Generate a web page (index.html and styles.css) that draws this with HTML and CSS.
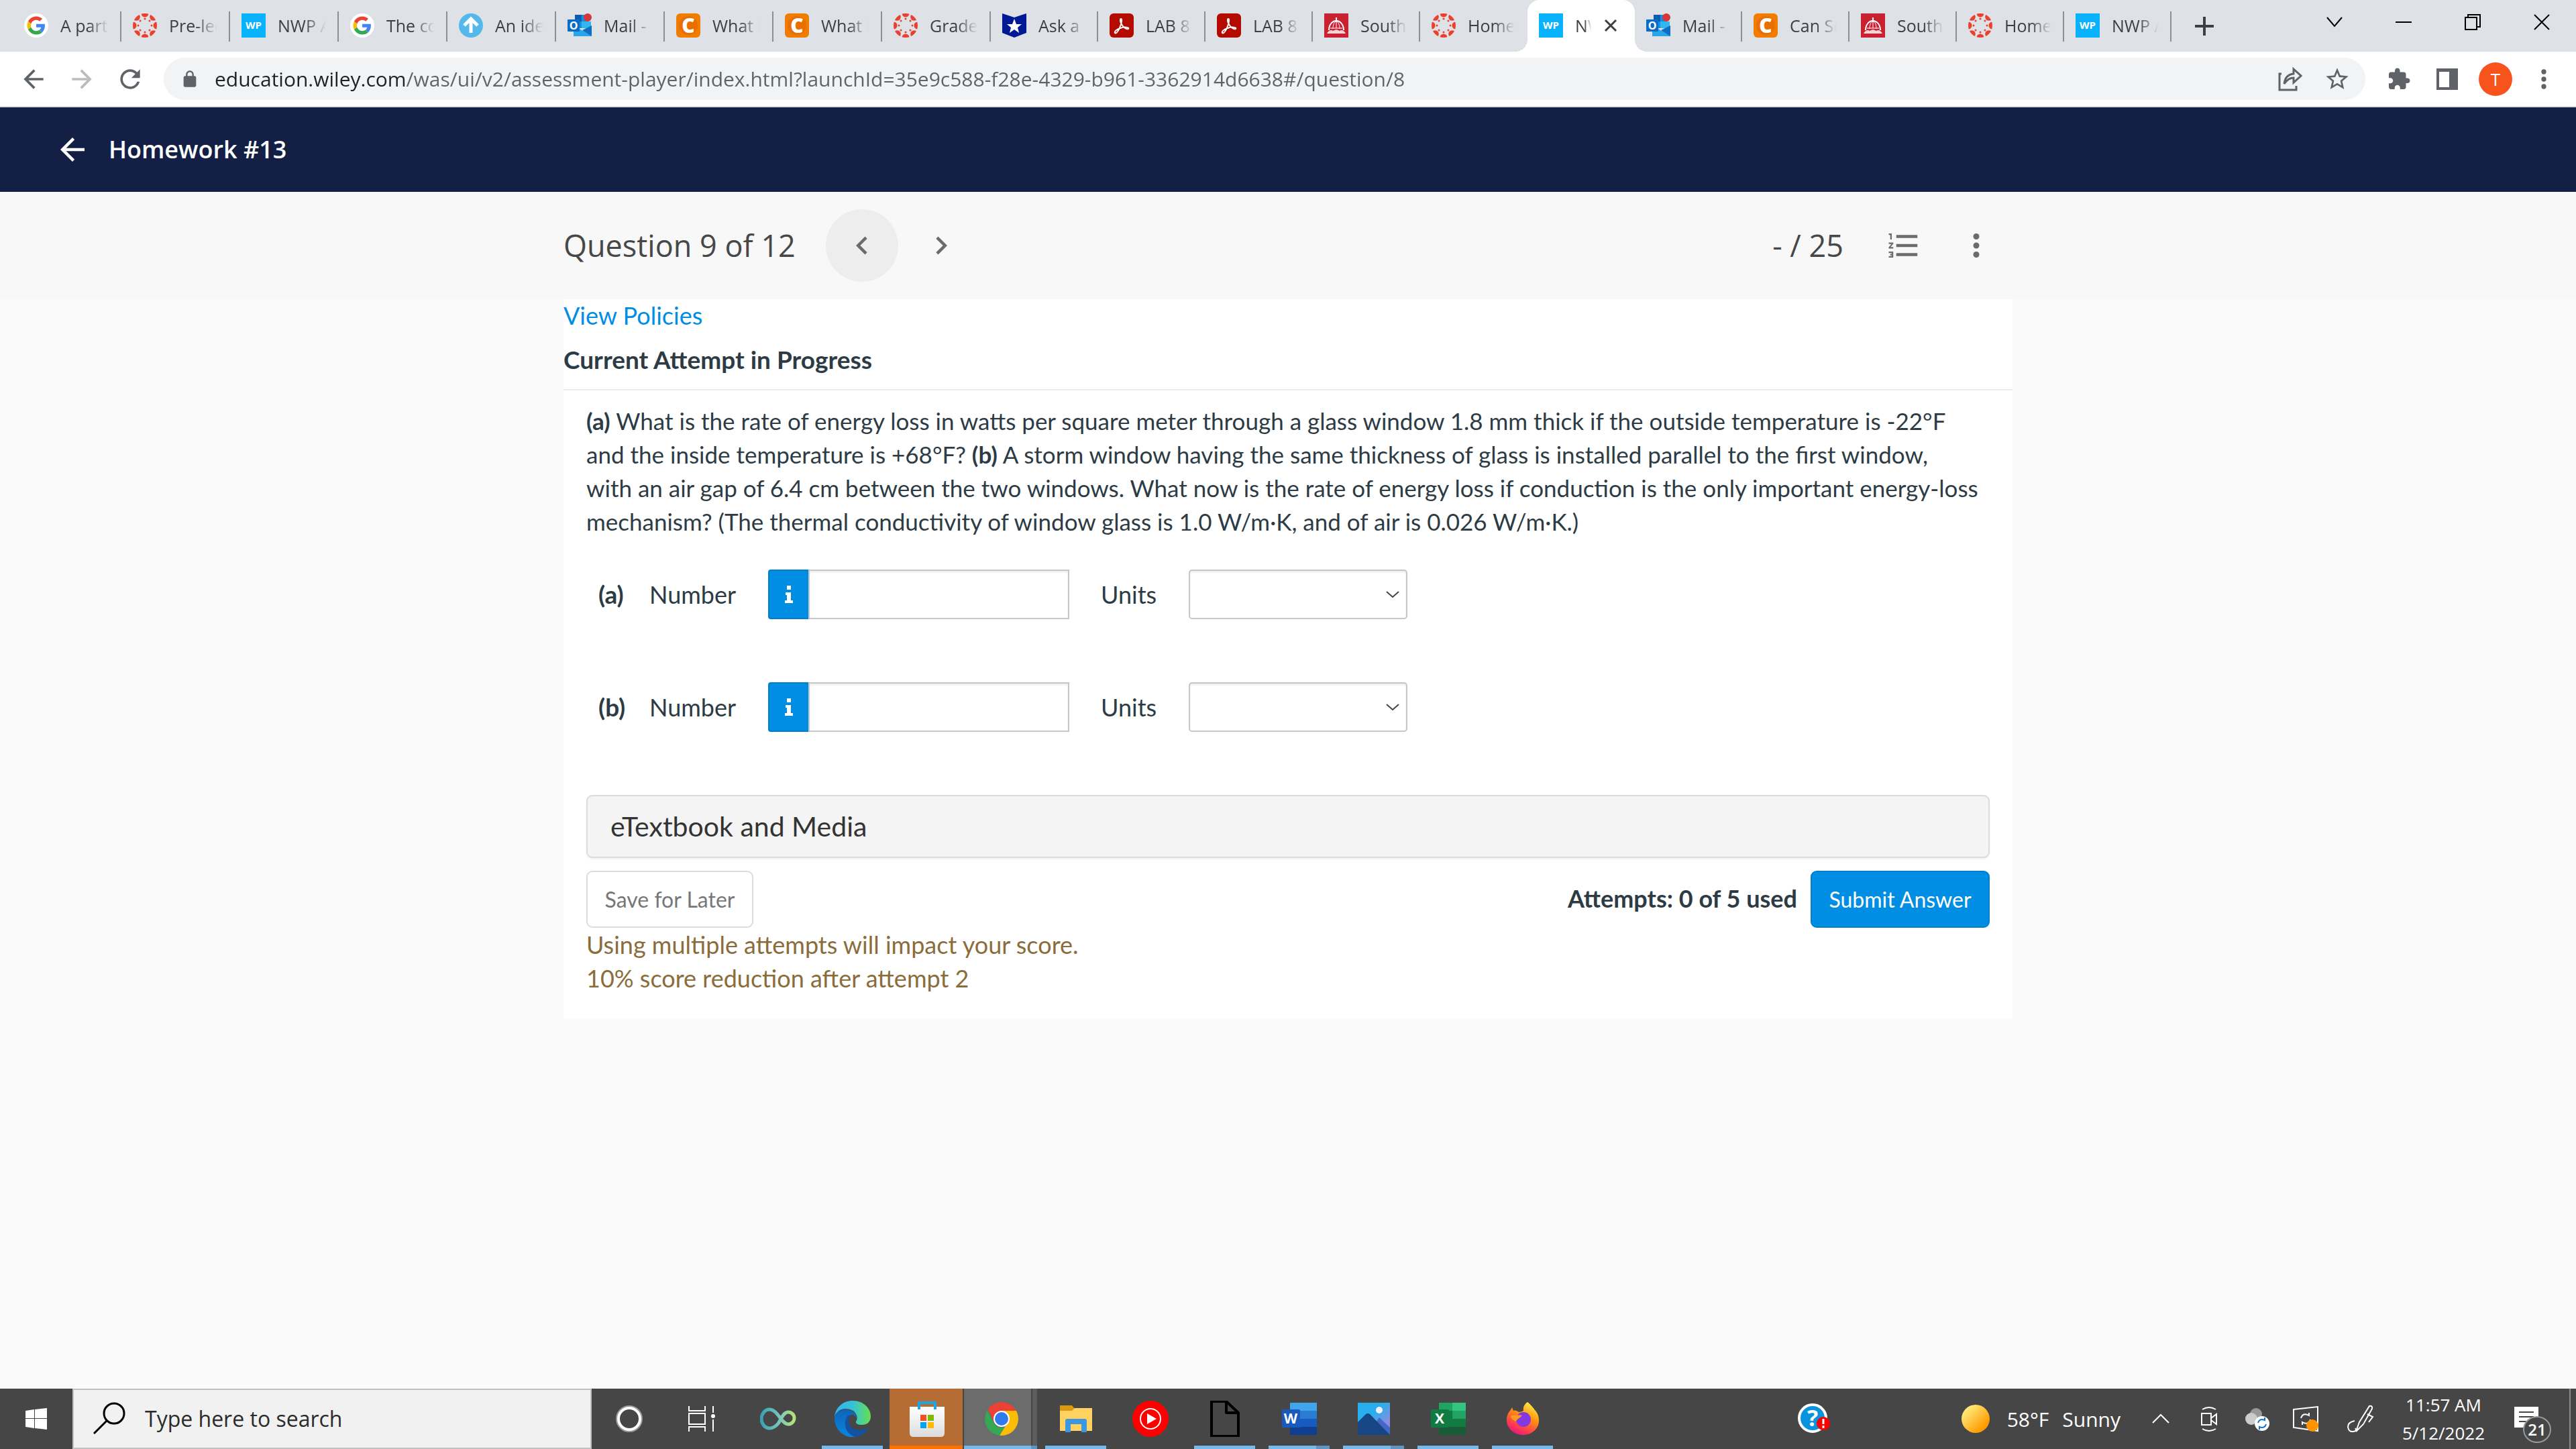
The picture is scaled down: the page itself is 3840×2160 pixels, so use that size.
FILE: index.html
```html
<!DOCTYPE html>
<html lang="en">
<head>
    <meta charset="UTF-8">
    <meta name="viewport" content="width=device-width, initial-scale=1.0">
    <title>NWP Assessment Player UI Application</title>
    <link rel="stylesheet" href="styles.css">
</head>
<body>

<!-- Shared icons -->
<svg class="sprite" aria-hidden="true">
    <defs>
        <clipPath id="clip-ring"><circle cx="18" cy="18" r="18"/></clipPath>
        <clipPath id="clip-chrome"><circle cx="25" cy="25" r="25"/></clipPath>
        <linearGradient id="grad-sun" x1="0" y1="0" x2="1" y2="1">
            <stop offset="0.2" stop-color="#ffe574"/><stop offset="0.8" stop-color="#ff9a00"/>
        </linearGradient>
        <linearGradient id="grad-loop" x1="0" y1="0" x2="1" y2="0">
            <stop offset="0" stop-color="#3aa0b8"/><stop offset="0.6" stop-color="#7fcbb8"/><stop offset="1" stop-color="#b4e07c"/>
        </linearGradient>
        <linearGradient id="grad-edge" x1="0" y1="0" x2="1" y2="0">
            <stop offset="0" stop-color="#35b4f2"/><stop offset="0.5" stop-color="#35c1d8"/><stop offset="1" stop-color="#66e04e"/>
        </linearGradient>
        <linearGradient id="grad-edge-low" x1="0" y1="0" x2="0" y2="1">
            <stop offset="0" stop-color="#0c66b8"/><stop offset="1" stop-color="#0a84e0"/>
        </linearGradient>
        <linearGradient id="grad-fox" x1="0.8" y1="0" x2="0.3" y2="1">
            <stop offset="0" stop-color="#fff44f"/><stop offset="0.4" stop-color="#ff980e"/><stop offset="0.8" stop-color="#ff3750"/><stop offset="1" stop-color="#e31587"/>
        </linearGradient>
        <linearGradient id="grad-bag" x1="0" y1="0" x2="0" y2="1">
            <stop offset="0" stop-color="#ffffff"/><stop offset="1" stop-color="#dcdcdc"/>
        </linearGradient>
        <linearGradient id="grad-sky" x1="0" y1="0" x2="1" y2="1">
            <stop offset="0.4" stop-color="#28aeec"/><stop offset="0.8" stop-color="#8f8ce0"/>
        </linearGradient>
    </defs>
    <symbol id="google" viewBox="0 0 64 64">
        <circle cx="32" cy="32" r="32" fill="#fff"/>
        <g transform="translate(8 8)">
            <path fill="#ea4335" d="M24 9.5c3.54 0 6.71 1.22 9.21 3.6l6.85-6.85C35.9 2.38 30.47 0 24 0 14.62 0 6.51 5.38 2.56 13.22l7.98 6.19C12.43 13.72 17.74 9.5 24 9.5z"/>
            <path fill="#4285f4" d="M46.98 24.55c0-1.57-.15-3.09-.38-4.55H24v9.02h12.94c-.58 2.96-2.26 5.48-4.78 7.18l7.73 6c4.51-4.18 7.09-10.36 7.09-17.65z"/>
            <path fill="#fbbc05" d="M10.53 28.59c-.48-1.45-.76-2.99-.76-4.59s.27-3.14.76-4.59l-7.98-6.19C.92 16.46 0 20.12 0 24c0 3.88.92 7.54 2.56 10.78l7.97-6.19z"/>
            <path fill="#34a853" d="M24 48c6.48 0 11.93-2.13 15.89-5.81l-7.73-6c-2.15 1.45-4.92 2.3-8.16 2.3-6.26 0-11.57-4.22-13.47-9.91l-7.98 6.19C6.51 42.62 14.62 48 24 48z"/>
        </g>
    </symbol>
    <symbol id="canvas" viewBox="0 0 36 36">
        <g fill="#e8412f" clip-path="url(#clip-ring)">
            <circle cx="18" cy="0" r="5.5"/><circle cx="30.7" cy="5.3" r="5.5"/><circle cx="36" cy="18" r="5.5"/><circle cx="30.7" cy="30.7" r="5.5"/>
            <circle cx="18" cy="36" r="5.5"/><circle cx="5.3" cy="30.7" r="5.5"/><circle cx="0" cy="18" r="5.5"/><circle cx="5.3" cy="5.3" r="5.5"/>
            <circle cx="18" cy="8" r="1.5"/><circle cx="25" cy="11" r="1.5"/><circle cx="28" cy="18" r="1.5"/><circle cx="25" cy="25" r="1.5"/>
            <circle cx="18" cy="28" r="1.5"/><circle cx="11" cy="25" r="1.5"/><circle cx="8" cy="18" r="1.5"/><circle cx="11" cy="11" r="1.5"/>
        </g>
    </symbol>
    <symbol id="wp" viewBox="0 0 36 36">
        <rect width="36" height="36" fill="#08b2fc"/>
        <text class="logo-text" x="18" y="23" font-size="15" text-anchor="middle">WP</text>
    </symbol>
    <symbol id="arrow-up" viewBox="0 0 36 36">
        <circle cx="18" cy="18" r="18" fill="#53b9ea"/>
        <path d="M18 29V9M8 18L18 8l10 10" fill="none" stroke="#fff" stroke-width="5"/>
    </symbol>
    <symbol id="outlook" viewBox="0 0 36 36">
        <path d="M11 2h20v20H11z" fill="#1490df"/><path d="M11 2h10v10H11z" fill="#0a5cb0"/><path d="M21 12h14v10H21z" fill="#32b8f0"/>
        <path d="M9 18l14 8 13-8v16H9z" fill="#2aa5ea"/><path d="M36 18v16L22 25z" fill="#0f6fc4"/>
        <rect y="9" width="18" height="18" rx="1" fill="#0a6cc8"/>
        <text class="logo-text" x="9" y="24" font-size="16" text-anchor="middle">O</text>
        <circle cx="30" cy="6" r="6" fill="#d6353a"/>
    </symbol>
    <symbol id="chegg" viewBox="0 0 36 36">
        <rect width="36" height="36" rx="6" fill="#f07d00"/>
        <circle cx="18" cy="18" r="14" fill="#e96f00"/>
        <text class="logo-text heavy" x="18" y="29" font-size="30" text-anchor="middle">C</text>
    </symbol>
    <symbol id="badge-star" viewBox="0 0 36 36">
        <path d="M0 0l18 6 18-6v29l-18 7-18-7z" fill="#001a96"/>
        <path d="M18 8l3 8h8l-6 5 2 8-7-5-7 5 2-8-6-5h8z" fill="#fff"/>
    </symbol>
    <symbol id="acrobat" viewBox="0 0 36 36">
        <rect width="36" height="36" rx="6" fill="#b30b00"/>
        <path d="M17 8c-2 0-1 6 2 10 3 4 7 6 9 5 2-2-6-4-12-1-6 2-9 5-8 7 2 2 6-4 8-10 2-5 3-11 1-11z" fill="none" stroke="#fff" stroke-width="2"/>
    </symbol>
    <symbol id="dome" viewBox="0 0 36 36">
        <rect width="36" height="36" fill="#c92132"/>
        <path d="M18 6v5M7 25c0-8 5-14 11-14s11 6 11 14" fill="none" stroke="#fff" stroke-width="2"/>
        <path d="M18 11v11M13 23c0-6 2-11 5-11s5 5 5 11M9 22h18" fill="none" stroke="#fff" stroke-width="1"/>
        <path d="M4 30q4-7 9-4l5-2 5 2q5-3 9 4z" fill="#fff" fill-opacity="0.8"/>
    </symbol>
    <symbol id="back" viewBox="0 0 24 24"><path fill="currentColor" d="M20 11H7.83l5.59-5.59L12 4l-8 8 8 8 1.41-1.41L7.83 13H20v-2z"/></symbol>
    <symbol id="forward" viewBox="0 0 24 24"><path fill="currentColor" d="M12 4l-1.41 1.41L16.17 11H4v2h12.17l-5.58 5.59L12 20l8-8z"/></symbol>
    <symbol id="dots" viewBox="0 0 24 24"><g fill="currentColor"><circle cx="12" cy="6" r="2"/><circle cx="12" cy="12" r="2"/><circle cx="12" cy="18" r="2"/></g></symbol>
</svg>

<header class="browser">
    <div class="tab-strip">
        <nav class="tabs" aria-label="Tabs">
            <a class="tab" href="#"><svg><use href="#google"/></svg><span>A part</span></a>
            <a class="tab" href="#"><svg><use href="#canvas"/></svg><span>Pre-lec</span></a>
            <a class="tab" href="#"><svg><use href="#wp"/></svg><span>NWP A</span></a>
            <a class="tab" href="#"><svg><use href="#google"/></svg><span>The co</span></a>
            <a class="tab" href="#"><svg><use href="#arrow-up"/></svg><span>An ide</span></a>
            <a class="tab" href="#"><svg><use href="#outlook"/></svg><span>Mail -</span></a>
            <a class="tab" href="#"><svg><use href="#chegg"/></svg><span>What i</span></a>
            <a class="tab" href="#"><svg><use href="#chegg"/></svg><span>What i</span></a>
            <a class="tab" href="#"><svg><use href="#canvas"/></svg><span>Grade</span></a>
            <a class="tab" href="#"><svg><use href="#badge-star"/></svg><span>Ask a</span></a>
            <a class="tab" href="#"><svg><use href="#acrobat"/></svg><span>LAB 8</span></a>
            <a class="tab" href="#"><svg><use href="#acrobat"/></svg><span>LAB 8</span></a>
            <a class="tab" href="#"><svg><use href="#dome"/></svg><span>South</span></a>
            <a class="tab before-active" href="#"><svg><use href="#canvas"/></svg><span>Home</span></a>
            <div class="tab active">
                <svg><use href="#wp"/></svg><span>NW</span>
                <button class="tab-close" aria-label="Close tab"><svg viewBox="0 0 20 20"><path d="M2 2l16 16M18 2L2 18" stroke="#3c4043" stroke-width="3"/></svg></button>
            </div>
            <a class="tab" href="#"><svg><use href="#outlook"/></svg><span>Mail -</span></a>
            <a class="tab" href="#"><svg><use href="#chegg"/></svg><span>Can So</span></a>
            <a class="tab" href="#"><svg><use href="#dome"/></svg><span>South</span></a>
            <a class="tab" href="#"><svg><use href="#canvas"/></svg><span>Home</span></a>
            <a class="tab" href="#"><svg><use href="#wp"/></svg><span>NWP A</span></a>
        </nav>
        <button class="new-tab" aria-label="New tab"><svg viewBox="0 0 28 28"><path d="M14 0v28M0 14h28" stroke="#3c4043" stroke-width="4"/></svg></button>
        <div class="window-controls">
            <button aria-label="Search tabs"><svg viewBox="0 0 24 24"><path d="M1 5l11 13L23 5"/></svg></button>
            <button aria-label="Minimize"><svg viewBox="0 0 24 24"><path d="M0 12h24"/></svg></button>
            <button aria-label="Restore"><svg viewBox="0 0 24 24"><path d="M1 5h17v18H1zM5 5V1h18v18h-5"/></svg></button>
            <button aria-label="Close"><svg viewBox="0 0 24 24"><path d="M1 1l22 22M23 1L1 23"/></svg></button>
        </div>
    </div>
    <div class="toolbar">
        <div class="nav-buttons">
            <button aria-label="Back"><svg><use href="#back"/></svg></button>
            <button aria-label="Forward" class="faded"><svg><use href="#forward"/></svg></button>
            <button aria-label="Reload"><svg viewBox="0 0 24 24"><path fill="currentColor" d="M17.65 6.35C16.2 4.9 14.21 4 12 4c-4.42 0-7.99 3.58-7.99 8s3.57 8 7.99 8c3.73 0 6.84-2.55 7.73-6h-2.08c-.82 2.33-3.04 4-5.65 4-3.31 0-6-2.69-6-6s2.69-6 6-6c1.66 0 3.14.69 4.22 1.78L13 11h7V4l-2.35 2.35z"/></svg></button>
        </div>
        <div class="omnibox">
            <svg class="lock" viewBox="0 0 24 24"><path fill="currentColor" d="M18 8h-1V6c0-2.76-2.24-5-5-5S7 3.24 7 6v2H6c-1.1 0-2 .9-2 2v10c0 1.1.9 2 2 2h12c1.1 0 2-.9 2-2V10c0-1.1-.9-2-2-2zM9 6c0-1.66 1.34-3 3-3s3 1.34 3 3v2H9V6z"/></svg>
            <input type="text" class="url" aria-label="Address" value="education.wiley.com/was/ui/v2/assessment-player/index.html?launchId=35e9c588-f28e-4329-b961-3362914d6638#/question/8">
            <button aria-label="Share"><svg viewBox="0 0 36 36"><path d="M5 10H2v24h25v-6M9 25c1-9 5-14 14-15V3l11 10-11 10v-7c-6 0-10 3-14 9z" fill="none" stroke="currentColor" stroke-width="3"/></svg></button>
            <button aria-label="Bookmark"><svg class="star" viewBox="0 0 24 24"><path fill="currentColor" d="M22 9.24l-7.19-.62L12 2 9.19 8.63 2 9.24l5.46 4.73L5.82 21 12 17.27 18.18 21l-1.63-7.03L22 9.24zM12 15.4l-3.76 2.27 1-4.28-3.32-2.88 4.38-.38L12 6.1l1.71 4.04 4.38.38-3.32 2.88 1 4.28L12 15.4z"/></svg></button>
        </div>
        <div class="nav-buttons">
            <button aria-label="Extensions"><svg class="small" viewBox="0 0 24 24"><path fill="currentColor" d="M20.5 11H19V7c0-1.1-.9-2-2-2h-4V3.5C13 2.12 11.88 1 10.5 1S8 2.12 8 3.5V5H4c-1.1 0-1.99.9-1.99 2v3.8H3.5c1.49 0 2.7 1.21 2.7 2.7s-1.21 2.7-2.7 2.7H2V20c0 1.1.9 2 2 2h3.8v-1.5c0-1.49 1.21-2.7 2.7-2.7 1.49 0 2.7 1.21 2.7 2.7V22H17c1.1 0 2-.9 2-2v-4h1.5c1.38 0 2.5-1.12 2.5-2.5S21.88 11 20.5 11z"/></svg></button>
            <button aria-label="Side panel"><svg class="small" viewBox="0 0 36 36"><path fill="currentColor" fill-rule="evenodd" d="M2 2h32v32H2zM6 7v23h15V7z"/></svg></button>
            <button aria-label="Profile"><span class="avatar">T</span></button>
            <button aria-label="Menu"><svg><use href="#dots"/></svg></button>
        </div>
    </div>
</header>

<main class="page">
    <div class="app-bar">
        <button class="app-back" aria-label="Back to assignments"><svg><use href="#back"/></svg></button>
        <h1>Homework #13</h1>
    </div>

    <div class="question-bar">
        <div class="wrap">
            <h2>Question 9 of 12</h2>
            <button class="round filled" aria-label="Previous question"><svg viewBox="0 0 24 24"><path fill="currentColor" d="M15.41 7.41L14 6l-6 6 6 6 1.41-1.41L10.83 12z"/></svg></button>
            <button class="round" aria-label="Next question"><svg viewBox="0 0 24 24"><path fill="currentColor" d="M8.59 16.59L10 18l6-6-6-6-1.41 1.41L13.17 12z"/></svg></button>
            <div class="score">- / 25</div>
            <div class="bar-menu">
                <button class="round" aria-label="Question list"><svg viewBox="0 0 24 24"><path fill="currentColor" d="M2 17h2v.5H3v1h1v.5H2v1h3v-4H2v1zm1-9h1V4H2v1h1v3zm-1 3h1.8L2 13.1v.9h3v-1H3.2L5 10.9V10H2v1zm5-6v2h14V5H7zm0 14h14v-2H7v2zm0-6h14v-2H7v2z"/></svg></button>
                <button class="round" aria-label="More options"><svg><use href="#dots"/></svg></button>
            </div>
        </div>
    </div>

    <div class="wrap panel">
        <a class="policies" href="#">View Policies</a>
        <h3>Current Attempt in Progress</h3>
        <form class="question">
            <p class="question-text"><b>(a)</b> What is the rate of energy loss in watts per square meter through a glass window 1.8 mm thick if the outside temperature is -22°F<br>
                and the inside temperature is +68°F? <b>(b)</b> A storm window having the same thickness of glass is installed parallel to the first window,<br>
                with an air gap of 6.4 cm between the two windows. What now is the rate of energy loss if conduction is the only important energy-loss<br>
                mechanism? (The thermal conductivity of window glass is 1.0 W/m·K, and of air is 0.026 W/m·K.)</p>

            <div class="answer-row">
                <b class="part">(a)</b>
                <label class="number-label" for="number-a">Number</label>
                <button type="button" class="info" aria-label="Number format help"><svg viewBox="0 0 12 26"><path fill="#fff" d="M3 0h6v6H3zM1 10h8v12h3v4H0v-4h3v-8H1z"/></svg></button>
                <input type="text" id="number-a" class="number">
                <label class="units-label" for="units-a">Units</label>
                <span class="select-box">
                    <select id="units-a"><option></option><option>W/m^2</option></select>
                    <svg viewBox="0 0 20 11"><path d="M1 1l9 8 9-8"/></svg>
                </span>
            </div>
            <div class="answer-row">
                <b class="part">(b)</b>
                <label class="number-label" for="number-b">Number</label>
                <button type="button" class="info" aria-label="Number format help"><svg viewBox="0 0 12 26"><path fill="#fff" d="M3 0h6v6H3zM1 10h8v12h3v4H0v-4h3v-8H1z"/></svg></button>
                <input type="text" id="number-b" class="number">
                <label class="units-label" for="units-b">Units</label>
                <span class="select-box">
                    <select id="units-b"><option></option><option>W/m^2</option></select>
                    <svg viewBox="0 0 20 11"><path d="M1 1l9 8 9-8"/></svg>
                </span>
            </div>

            <button type="button" class="etextbook">eTextbook and Media</button>

            <div class="actions">
                <button type="button" class="save">Save for Later</button>
                <span class="attempts">Attempts: 0 of 5 used</span>
                <button type="submit" class="submit">Submit Answer</button>
            </div>
            <p class="warning">Using multiple attempts will impact your score.<br>10% score reduction after attempt 2</p>
        </form>
    </div>
</main>

<footer class="taskbar">
    <button class="start" aria-label="Start"><svg viewBox="0 0 32 32"><path fill="#fff" d="M0 4l13-2v13H0zM14 2l18-2v15H14zM0 16h13v14L0 28zM14 16h18v16l-18-2z"/></svg></button>
    <div class="search">
        <svg viewBox="0 0 50 50"><circle cx="32" cy="17" r="15" fill="none" stroke="#000" stroke-width="3"/><path d="M21 28L2 47" stroke="#000" stroke-width="3"/></svg>
        <input type="text" aria-label="Search" placeholder="Type here to search">
    </div>
    <div class="apps">
        <button aria-label="Cortana"><svg viewBox="0 0 54 54"><circle cx="27" cy="27" r="18" fill="none" stroke="#999" stroke-width="4"/><circle cx="27" cy="27" r="16" fill="none" stroke="#fff" stroke-width="4"/></svg></button>
        <button aria-label="Task View"><svg viewBox="0 0 54 54"><g fill="none" stroke="#fff" stroke-width="2"><path d="M5 8v7h24V8M5 46v-7h24v7M5 19h24v16H5zM41 8v10M41 28v18"/></g><circle cx="41" cy="23" r="3" fill="#fff"/></svg></button>
        <button aria-label="Loop"><svg viewBox="0 0 54 54"><path d="M27 34C22 40 18 41 14 41 7 41 2 34 2 27s5-14 12-14c12 0 18 22 28 22 5 0 9-4 9-9s-4-9-9-9c-8 0-11 12-15 17z" fill="none" stroke="url(#grad-loop)" stroke-width="5"/></svg></button>
        <button class="open" aria-label="Edge"><svg viewBox="0 0 54 54"><path d="M0 27C0 10 13 0 27 0c17 0 27 12 27 23 0 9-6 13-13 13-6 0-10-2-9-5 2-3 2-6 1-9-3-8-10-10-17-10C8 12 0 18 0 27z" fill="url(#grad-edge)"/><path d="M0 27c0-9 8-14 16-14 8 0 17 4 17 14-2-5-6-8-11-5-8 4-8 18 1 26 4 4 9 6 9 6C15 57 0 43 0 27z" fill="url(#grad-edge-low)"/><path d="M20 22c-8 10-5 26 10 32 9 0 17-6 20-14-12 7-28 3-29-9 0-4 1-7 4-9z" fill="#1252a0"/></svg></button>
        <button class="open attention" aria-label="Store"><svg viewBox="0 0 54 54"><path d="M1 9h52v39q0 6-6 6H7q-6 0-6-6z" fill="url(#grad-bag)"/><path d="M15 13V3h24v10" fill="none" stroke="#1aa7e8" stroke-width="4"/><path fill="#f25022" d="M17 21h9v9h-9z"/><path fill="#7fba00" d="M28 21h9v9h-9z"/><path fill="#00a4ef" d="M17 32h9v9h-9z"/><path fill="#ffb900" d="M28 32h9v9h-9z"/></svg></button>
        <button class="open current" aria-label="Chrome"><svg class="chrome-icon" viewBox="0 0 50 50"><g clip-path="url(#clip-chrome)"><path fill="#ea4335" d="M0 0h50v13H25L14 31z"/><path fill="#34a853" d="M3 11l11 21c3 6 9 7 17 5L22 52-5 50z"/><path fill="#fbbc05" d="M25 13h27v39H21l12-20c5-7 3-15-8-19z"/></g><circle cx="25" cy="25" r="12" fill="#fff"/><circle cx="25" cy="25" r="10" fill="#2f7aec"/></svg></button>
        <button class="open" aria-label="File Explorer"><svg viewBox="0 0 54 54"><path d="M3 7h18l4 5v8H3z" fill="#d99a0b"/><path d="M3 15h18l4-4h26v34H3z" fill="#ffd262"/><path d="M11 47V30q0-3 3-3h26q3 0 3 3v17h-8V35H19v12z" fill="#3b97de"/></svg></button>
        <button aria-label="YouTube Music"><svg viewBox="0 0 54 54"><circle cx="27" cy="27" r="27" fill="#f00"/><circle cx="27" cy="27" r="15" fill="none" stroke="#fff" stroke-width="2"/><path d="M22 19l14 8-14 8z" fill="#fff"/></svg></button>
        <button class="open" aria-label="Document"><svg viewBox="0 0 54 54"><path d="M7 1h22l18 17v35H7zM29 1v17h18" fill="none" stroke="#000" stroke-width="4" stroke-linejoin="round"/></svg></button>
        <button class="open stacked" aria-label="Word"><svg viewBox="0 0 54 54"><path fill="#41a5ee" d="M13 3h40v12H13z"/><path fill="#2b7cd3" d="M13 15h40v12H13z"/><path fill="#185abd" d="M13 27h40v12H13z"/><path fill="#103f91" d="M13 39h40v12H13z"/><rect x="1" y="13" width="27" height="27" rx="2" fill="#185abd"/><text class="logo-text" x="14" y="34" font-size="21" text-anchor="middle">W</text></svg></button>
        <button class="open stacked" aria-label="Photos"><svg viewBox="0 0 54 54"><path fill="url(#grad-sky)" d="M3 3h48v48H3z"/><ellipse cx="35" cy="14" rx="5" ry="5" fill="#eef3f8"/><path d="M28 35l7-10 16 15v11H28z" fill="#4468c8"/><path d="M3 32l12-12q3-2 6 0l30 31H3z" fill="#174684"/></svg></button>
        <button class="open" aria-label="Excel"><svg viewBox="0 0 54 54"><path fill="#21a366" d="M13 3h20v12H13z"/><path fill="#33c481" d="M33 3h20v12H33z"/><path fill="#107c41" d="M13 15h20v24H13z"/><path fill="#21a366" d="M33 15h20v12H33z"/><path fill="#107c41" d="M33 27h20v12H33z"/><path fill="#185c37" d="M13 39h40v12H13z"/><rect x="1" y="13" width="27" height="27" rx="2" fill="#107c41"/><text class="logo-text" x="14" y="34" font-size="21" text-anchor="middle">X</text></svg></button>
        <button class="open" aria-label="Firefox"><svg viewBox="0 0 54 54"><path d="M34 2c6 5 9 9 11 12 5 5 6 11 6 16 0 12-11 21-24 21S3 41 3 29c0-6 2-11 5-14l3-5 2 5c3-1 5 0 8 2 4-1 7-1 7-3-1-5 2-9 6-12z" fill="url(#grad-fox)"/><circle cx="28" cy="28" r="11" fill="#8338e0"/><path d="M9 22c5 0 10-1 17 0-3 4-8 5-9 9-5-2-8-5-8-9z" fill="#ff9a1e"/></svg></button>
    </div>
    <div class="tray">
        <button class="help" aria-label="Get Help"><svg viewBox="0 0 50 46"><circle cx="22" cy="22" r="20" fill="#0a93dd" stroke="#fff" stroke-width="4"/><text class="logo-text" x="22" y="34" font-size="34" text-anchor="middle">?</text><circle cx="38" cy="30" r="10" fill="#f00"/><path d="M38 23v8M38 33v4" stroke="#fff" stroke-width="3"/></svg></button>
        <button class="weather">
            <svg viewBox="0 0 42 42"><circle cx="21" cy="21" r="21" fill="url(#grad-sun)"/></svg>
            <span>58°F</span><span>Sunny</span>
        </button>
        <button aria-label="Show hidden icons"><svg viewBox="0 0 42 42"><path d="M9 27l12-12 12 12"/></svg></button>
        <button aria-label="Meet Now"><svg viewBox="0 0 42 42"><path d="M10 13h14v17H10zM24 20l8-6v15l-8-6M11 7q10-6 20 0M11 36q10 6 20 0"/></svg></button>
        <button aria-label="OneDrive"><svg viewBox="0 0 42 42"><circle cx="19" cy="14" r="9" fill="#999" stroke="none"/><circle cx="12" cy="21" r="9" fill="#ccc" stroke="none"/><circle cx="28" cy="28" r="11" fill="#fff" stroke="none"/><path d="M22 27q2-7 10-4v-4M34 29q-2 7-10 4v4" stroke="#1472c8"/></svg></button>
        <button aria-label="Windows Update"><svg viewBox="0 0 42 42"><path d="M3 7l36-4v36L3 34zM14 20q3-9 12-4v-4M28 22q-3 9-12 4v4"/><circle cx="31" cy="31" r="9" fill="#ff9300" stroke="none"/></svg></button>
        <button class="wide" aria-label="Windows Ink"><svg viewBox="0 0 42 42"><path d="M14 40l5-14L34 2q5-1 4 4L25 29zM12 24q-10 2-10 9 1 8 8 7 6-1 3-5M31 14l8 4-6 8"/></svg></button>
        <button class="clock"><span>11:57 AM</span><span>5/12/2022</span></button>
        <button class="notifications" aria-label="Notifications">
            <svg viewBox="0 0 36 36"><path fill="#fff" stroke="none" d="M0 0h36v31H22l-8 5v-5H0z"/><path d="M7 8h22M7 15h22M7 22h16" stroke="#464646" stroke-width="2"/></svg>
            <span class="badge">21</span>
        </button>
        <button class="show-desktop" aria-label="Show desktop"></button>
    </div>
</footer>

</body>
</html>
```
FILE: styles.css
```css
* { box-sizing: border-box; }
body {
    margin: 0; min-height: 100vh; display: flex; flex-direction: column;
    font-family: "Open Sans", "Noto Sans", sans-serif; background: #fafafa; color: #2d3b45;
}
button { padding: 0; border: none; background: none; font: inherit; color: inherit; cursor: pointer; }
h1, h2, h3, p { margin: 0; }
svg { display: block; flex: none; }
.sprite { position: absolute; width: 0; height: 0; }
.logo-text { font-family: "Open Sans", sans-serif; font-weight: 700; fill: #fff; }
.logo-text.heavy { font-weight: 800; }

/* ---- Browser tabs ---- */
.tab-strip { display: flex; align-items: stretch; height: 77px; padding-left: 19px; background: #dee1e6; }
.tabs { display: flex; }
.tab {
    position: relative; display: flex; align-items: center; gap: 18px; width: 162px; padding: 0 18px 1px 17px;
    color: #3c4043; font-size: 25px; line-height: 36px; text-decoration: none;
}
.tab:nth-child(n+10) { width: 160px; }
.tab svg { width: 36px; height: 36px; }
.tab span {
    flex: 1; min-width: 0; overflow: hidden; white-space: nowrap;
    -webkit-mask-image: linear-gradient(90deg, #000 55%, transparent 98%);
    mask-image: linear-gradient(90deg, #000 55%, transparent 98%);
}
.tab::after { content: ""; position: absolute; right: 0; top: 17px; width: 2px; height: 45px; background: #8b8e93; }
.tab.before-active::after { display: none; }
.tab.active { padding-right: 26px; background: #fff; border-radius: 18px 18px 0 0; }
/* flared feet of the selected tab */
.tab.active::before, .tab.active::after { content: ""; position: absolute; top: auto; bottom: 0; width: 18px; height: 18px; }
.tab.active::before { left: -18px; background: radial-gradient(circle at 0 0, transparent 18px, #fff 18px); }
.tab.active::after { right: -18px; background: radial-gradient(circle at 100% 0, transparent 18px, #fff 18px); }
.tab .tab-close svg { width: 20px; height: 20px; }
.new-tab { width: 98px; display: flex; align-items: center; justify-content: center; }
.new-tab svg { width: 28px; height: 28px; }
.window-controls { display: flex; margin-left: auto; height: 65px; }
.window-controls button { width: 103px; display: flex; align-items: center; justify-content: center; }
.window-controls svg { width: 24px; height: 24px; fill: none; stroke: #000; stroke-width: 2; }

/* ---- Address bar ---- */
.toolbar {
    display: flex; align-items: center; gap: 14px; height: 83px; padding: 0 12px 0 14px;
    background: #fff; border-bottom: 2px solid #dadcdd; color: #5f6368;
}
.nav-buttons { display: flex; }
.nav-buttons button { width: 72px; height: 72px; display: flex; align-items: center; justify-content: center; }
.nav-buttons svg { width: 44px; height: 44px; }
.nav-buttons .small { width: 36px; height: 36px; }
.faded { color: #babcbe; }
.omnibox {
    flex: 1; display: flex; align-items: center; height: 63px; padding: 0 7px 0 25px;
    background: #f1f3f4; border-radius: 32px;
}
.lock { width: 28px; height: 28px; margin-right: 23px; }
/* host name is darker than the path */
.url {
    flex: 1; border: none; padding: 0; outline: none; font: 30px/40px "Open Sans", sans-serif;
    background: linear-gradient(90deg, #202124 284px, #5f6368 284px);
    -webkit-background-clip: text; background-clip: text; color: transparent;
}
.omnibox button { width: 70px; display: flex; justify-content: center; }
.omnibox button svg { width: 36px; height: 36px; }
.omnibox .star { width: 40px; height: 40px; }
.avatar {
    width: 50px; height: 50px; border-radius: 50%; background: #f8521d; color: #fff;
    font-size: 26px; line-height: 50px; text-align: center;
}

/* ---- Assessment player ---- */
.page { flex: 1; }
.app-bar { display: flex; align-items: center; height: 126px; padding-left: 81px; background: #141f45; color: #fff; }
.app-back svg { width: 54px; height: 54px; }
.app-bar h1 { margin-left: 27px; font-size: 36px; font-weight: 600; line-height: 48px; }
.question-bar { background: #f8f8f8; color: #474747; }
.wrap { width: 2160px; max-width: 100%; margin: 0 auto; }
.question-bar .wrap { display: flex; align-items: center; height: 160px; }
.question-bar h2 { margin-right: 45px; font-size: 45px; font-weight: 400; line-height: 60px; }
.round { width: 108px; height: 108px; border-radius: 50%; display: flex; align-items: center; justify-content: center; color: #6b6b6b; }
.round svg { width: 54px; height: 54px; }
.round.filled { margin-right: 10px; background: #ededed; }
.score { margin-left: auto; margin-right: 36px; font-size: 45px; line-height: 60px; }
.bar-menu { display: flex; }

.panel { background: #fff; font-family: Lato, sans-serif; font-size: 36px; line-height: 50px; }
.policies { display: block; color: #008ee5; line-height: 48px; text-decoration: none; }
.panel h3 { padding: 17px 0 19px; border-bottom: 2px solid #ebeced; font-size: 37px; font-weight: 700; line-height: 50px; }
.question { padding: 20px 34px 35px; }
.question-text { margin-bottom: 47px; font-size: 35px; }
.answer-row { display: flex; align-items: center; height: 74px; margin-bottom: 94px; padding-left: 18px; }
.part { width: 76px; font-size: 37px; }
.number-label { width: 177px; }
.info {
    width: 60px; height: 74px; display: flex; align-items: center; justify-content: center;
    background: #008ee5; border: 2px solid #007fcd; border-right: none; border-radius: 4px 0 0 4px;
}
.info svg { width: 12px; height: 26px; }
.number { width: 389px; height: 74px; border: 2px solid #c7c7c7; padding: 0 16px; font: inherit; box-shadow: inset 0 2px 3px rgba(0,0,0,0.08); }
.units-label { width: 131px; margin-left: 47px; }
.select-box { position: relative; }
.select-box select {
    display: block; width: 326px; height: 74px; padding: 0 16px; appearance: none; background: #fff; font: inherit;
    border: 2px solid #c7c7c7; border-radius: 5px; box-shadow: inset 0 2px 3px rgba(0,0,0,0.08);
}
.select-box svg { position: absolute; right: 12px; top: 32px; width: 20px; height: 11px; fill: none; stroke: #444; stroke-width: 2; pointer-events: none; }
.etextbook {
    display: block; width: 100%; height: 94px; padding: 0 34px; text-align: left; color: #333; font-size: 41px;
    background: #f4f4f4; border: 2px solid #dcdcdc; border-radius: 9px; box-shadow: 0 2px 3px rgba(0,0,0,0.06);
}
.actions { display: flex; align-items: baseline; margin-top: 19px; }
.save, .submit { height: 85px; border-radius: 9px; font-size: 32px; }
.save { width: 249px; background: #fff; border: 2px solid #dcdcdc; color: #777; }
.attempts { margin-left: auto; margin-right: 20px; font-weight: 700; }
.submit { width: 267px; background: #008ee5; border: 2px solid #007fcd; color: #fff; }
.warning { color: #8a6d3b; }

/* ---- Taskbar ---- */
.taskbar { display: flex; height: 90px; background: #464646; color: #fff; }
.start { width: 108px; display: flex; align-items: center; justify-content: center; }
.start svg { width: 32px; height: 32px; }
.search { width: 774px; display: flex; align-items: center; gap: 28px; padding-left: 28px; background: #f1f1f1; border: 2px solid #c0c0c0; }
.search svg { width: 50px; height: 50px; }
.search input { flex: 1; border: none; padding: 0; background: none; outline: none; font: 32px/44px "Open Sans", sans-serif; }
.search input::placeholder { color: #2b2b2b; opacity: 1; }
.apps { display: flex; }
.apps button { position: relative; width: 111px; display: flex; align-items: center; justify-content: center; }
.apps svg { width: 54px; height: 54px; }
.apps .chrome-icon { width: 50px; height: 50px; }
.apps .open::after { content: ""; position: absolute; left: 10px; right: 10px; bottom: 0; height: 5px; background: #76b9ed; }
.apps .stacked::after { background: linear-gradient(90deg, #76b9ed 71px, #5f96c1 71px); }
.apps .attention { background: linear-gradient(90deg, #b56d35 109px, #464646 109px); }
.apps .attention::after { left: 0; right: 2px; background: #ff7200; }
.apps .current { background: linear-gradient(90deg, #6c6c6c 100px, #464646 100px 102px, #5c5c5c 102px 109px, #464646 109px); }
.apps .current::after { left: 0; right: 2px; background: linear-gradient(90deg, #76b9ed 100px, #5f96c1 100px); }
.tray { display: flex; margin-left: auto; }
.tray button { width: 72px; display: flex; align-items: center; justify-content: center; }
.tray svg { width: 42px; height: 42px; fill: none; stroke: #fff; stroke-width: 2; }
.tray .wide { width: 92px; }
.tray .help { width: 50px; margin-right: 194px; }
.tray .help svg { width: 50px; height: 46px; stroke: none; }
.tray .weather { width: auto; gap: 20px; margin-right: 24px; font-size: 30px; }
.weather svg { margin-right: 6px; stroke: none; }
.tray .clock { width: 155px; flex-direction: column; font-size: 26px; line-height: 42px; }
.tray .notifications { position: relative; width: 110px; justify-content: flex-start; padding-left: 28px; }
.tray .notifications svg { width: 36px; height: 36px; stroke: none; }
.badge {
    position: absolute; left: 41px; top: 41px; width: 42px; height: 40px; border: 2px solid #9a9a9a; border-radius: 50%;
    background: #464646; font-size: 24px; font-weight: 600; line-height: 36px; text-align: center;
}
.tray .show-desktop { width: 10px; border-left: 2px solid #8a8a8a; }
```
